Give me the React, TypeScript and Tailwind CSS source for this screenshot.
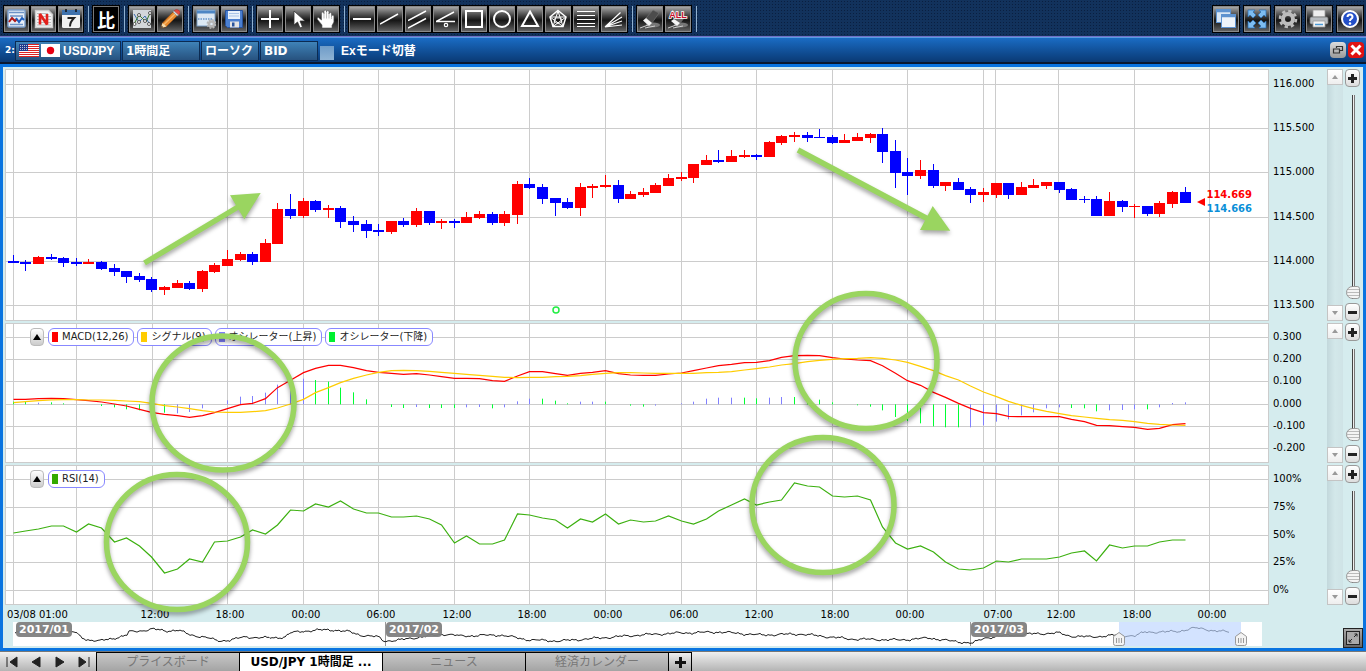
import React, { useState } from 'react';

type Candle = [number, number, number, number, 'r' | 'b'];

// x of the first bar and distance between two bars
const FIRST_X = 13;
const STEP = 12.6;
const barX = (i: number) => Math.floor(FIRST_X + STEP * i + 0.35);

// high, low, body top, body bottom, colour
const CANDLES: Candle[] = [
  [255, 263, 261, 263, 'b'], [260, 271, 262, 264, 'b'], [256, 264, 257, 264, 'r'], [254, 260, 257, 259, 'b'],
  [257, 267, 258, 263, 'b'], [258, 266, 262, 264, 'b'], [259, 264, 262, 264, 'r'], [261, 270, 262, 269, 'b'],
  [264, 276, 268, 272, 'b'], [271, 283, 271, 277, 'b'], [273, 282, 276, 280, 'b'], [277, 292, 279, 290, 'b'],
  [286, 295, 287, 290, 'r'], [280, 288, 283, 288, 'r'], [281, 290, 283, 289, 'b'], [270, 292, 271, 289, 'r'],
  [263, 273, 265, 272, 'r'], [250, 266, 259, 266, 'r'], [252, 261, 254, 260, 'r'], [252, 265, 254, 262, 'b'],
  [239, 262, 243, 262, 'r'], [203, 244, 209, 244, 'r'], [194, 219, 209, 216, 'b'], [198, 218, 201, 216, 'r'],
  [200, 212, 201, 210, 'b'], [205, 218, 208, 210, 'r'], [206, 228, 208, 222, 'b'], [216, 232, 221, 225, 'b'],
  [220, 238, 224, 231, 'b'], [224, 236, 230, 232, 'b'], [221, 234, 221, 232, 'r'], [218, 227, 221, 225, 'b'],
  [208, 227, 211, 225, 'r'], [211, 225, 211, 223, 'b'], [219, 229, 221, 223, 'r'], [219, 228, 221, 223, 'b'],
  [212, 223, 217, 223, 'r'], [211, 219, 214, 218, 'r'], [212, 225, 214, 223, 'b'], [211, 226, 214, 223, 'r'],
  [181, 224, 184, 215, 'r'], [178, 189, 184, 188, 'b'], [184, 204, 187, 199, 'b'], [198, 216, 198, 203, 'b'],
  [198, 209, 202, 208, 'b'], [183, 216, 187, 208, 'r'], [184, 198, 186, 188, 'r'], [175, 188, 185, 187, 'r'],
  [180, 203, 185, 199, 'b'], [191, 199, 194, 199, 'r'], [188, 197, 192, 195, 'r'], [183, 193, 185, 193, 'r'],
  [174, 186, 178, 186, 'r'], [172, 181, 177, 179, 'r'], [164, 183, 164, 178, 'r'], [155, 165, 160, 165, 'r'],
  [150, 163, 160, 162, 'b'], [150, 162, 156, 162, 'r'], [150, 158, 155, 157, 'r'], [154, 160, 155, 157, 'b'],
  [141, 157, 142, 157, 'r'], [135, 145, 136, 143, 'r'], [132, 142, 135, 137, 'r'], [132, 142, 135, 138, 'b'],
  [129, 138, 137, 138, 'b'], [135, 144, 137, 143, 'b'], [134, 143, 140, 143, 'r'], [133, 141, 137, 141, 'r'],
  [133, 143, 134, 138, 'r'], [128, 163, 134, 152, 'b'], [140, 188, 151, 173, 'b'], [158, 195, 172, 176, 'b'],
  [160, 179, 170, 176, 'r'], [164, 188, 170, 186, 'b'], [182, 191, 182, 186, 'r'], [178, 190, 182, 190, 'b'],
  [187, 203, 189, 195, 'b'], [188, 202, 192, 195, 'r'], [183, 198, 183, 195, 'r'], [183, 199, 183, 195, 'b'],
  [182, 195, 187, 195, 'r'], [179, 188, 185, 188, 'r'], [182, 189, 182, 186, 'r'], [182, 193, 182, 190, 'b'],
  [188, 200, 189, 200, 'b'], [196, 203, 199, 200, 'b'], [196, 216, 199, 216, 'b'], [192, 216, 201, 216, 'r'],
  [200, 212, 201, 207, 'b'], [204, 218, 206, 207, 'r'], [206, 216, 206, 214, 'b'], [201, 217, 203, 214, 'r'],
  [191, 208, 192, 204, 'r'], [187, 203, 192, 203, 'b'],
];

// The oscillator series are kept in thirds of a pixel below y=320
const fine = (v: number) => 320 + v / 3;
const ZERO = 253;

const MACD = [
  238, 238, 236, 235, 236, 239, 242, 246, 252, 258, 268, 277, 283, 287, 292, 287, 278, 266, 254, 250, 236, 203, 181, 158,
  145, 136, 136, 143, 152, 157, 160, 163, 161, 165, 170, 175, 175, 176, 182, 184, 168, 155, 155, 161, 166, 160, 157, 152,
  161, 165, 166, 166, 162, 159, 152, 144, 137, 133, 128, 127, 122, 112, 107, 106, 107, 113, 117, 120, 122, 137, 160, 182,
  196, 217, 232, 250, 265, 278, 281, 289, 290, 290, 290, 290, 298, 305, 316, 317, 320, 322, 328, 325, 314, 311,
];

const SIGNAL = [
  248, 245, 242, 240, 239, 239, 240, 240, 241, 243, 245, 250, 257, 261, 266, 272, 276, 277, 277, 275, 272, 264, 252, 238,
  218, 203, 188, 175, 165, 157, 152, 151, 152, 154, 157, 160, 163, 166, 169, 172, 173, 172, 172, 170, 169, 167, 163, 160,
  158, 158, 159, 160, 160, 160, 160, 158, 157, 155, 150, 146, 141, 135, 131, 125, 121, 118, 116, 115, 113, 115, 120, 127,
  139, 152, 167, 180, 198, 216, 230, 244, 256, 266, 274, 281, 287, 291, 295, 299, 301, 305, 310, 313, 315, 316,
];

// g = falling, p = rising
const OSCILLATOR =
  'g245 g246 p248 g247 g250 - - g258 g262 g268 g271 p275 g278 p280 p276 p265 - p241 p230 p228 p218 p194 p200 p176 g180 g185 g203 g217 g238 - g261 g264 p261 g264 g264 g264 p262 p261 g265 p262 p244 p236 g236 g242 g250 p245 p245 g245 - g257 g260 p257 - p250 p245 p236 p233 p233 g233 g235 p233 p231 g231 g235 g239 g247 - g256 g260 g271 g291 g303 g310 g319 g322 g322 p322 p316 p305 p298 p286 p277 p265 p262 g264 g265 g274 p271 p270 p268 g268 p262 p249 p247'.split(' ');

const RSI = [
  533, 531, 529, 526, 526, 532, 524, 528, 542, 538, 546, 557, 573, 569, 559, 562, 542, 541, 537, 530, 534, 525, 510, 511,
  504, 507, 501, 509, 513, 513, 517, 517, 516, 519, 525, 543, 536, 544, 544, 540, 514, 515, 518, 520, 528, 519, 522, 514,
  524, 520, 522, 521, 516, 521, 524, 519, 511, 505, 499, 505, 502, 500, 483, 486, 487, 496, 497, 496, 500, 527, 543, 549,
  546, 552, 562, 569, 570, 568, 561, 562, 559, 559, 559, 557, 553, 551, 561, 545, 548, 546, 546, 542, 540, 540,
];

const OVERVIEW = [
  [15, 633], [30, 632], [45, 630], [60, 633], [75, 632], [82, 638], [90, 640], [100, 641], [115, 638], [127, 635], [129, 632],
  [140, 631], [152, 629], [165, 631], [178, 630], [190, 635], [205, 637], [218, 641], [230, 640], [245, 637], [270, 638],
  [285, 637], [290, 633], [305, 631], [320, 630], [335, 630], [350, 632], [360, 635], [378, 637], [384, 641], [400, 640],
  [420, 637], [445, 634], [460, 636], [500, 635], [530, 640], [560, 641], [600, 638], [640, 635], [680, 633], [720, 632],
  [760, 635], [800, 634], [850, 639], [900, 640], [930, 638], [950, 641], [960, 642], [973, 643], [985, 638], [1000, 636],
  [1030, 634], [1058, 633], [1070, 636], [1090, 637], [1119, 635], [1135, 636], [1145, 632], [1165, 632], [1180, 631],
  [1195, 628], [1205, 629], [1215, 631], [1231, 632],
];

const GRID_X = [13, 76, 152, 227, 303, 378, 454, 529, 605, 681, 756, 832, 907, 983, 995, 1058, 1134, 1209];

const TIMES: [number, string][] = [
  [155, '12:00'], [230, '18:00'], [306, '00:00'], [381, '06:00'], [457, '12:00'], [532, '18:00'], [608, '00:00'],
  [684, '06:00'], [759, '12:00'], [835, '18:00'], [910, '00:00'], [998, '07:00'], [1061, '12:00'], [1137, '18:00'], [1212, '00:00'],
];

const line = (ys: number[]) => ys.map((y, i) => `${barX(i) + 0.5},${y}`).join(' ');

// adds the small tick noise between the stored points of the long term chart
const overviewPoints = () => {
  const out: string[] = [];
  for (let i = 0; i < OVERVIEW.length - 1; i++) {
    const [x0, y0] = OVERVIEW[i];
    const [x1, y1] = OVERVIEW[i + 1];
    for (let x = x0; x < x1; x += 2) {
      const noise = Math.sin(x * 1.7) * 0.5 + Math.sin(x * 0.61) * 0.6 + Math.sin(x * 0.23) * 0.7;
      out.push(`${x},${(y0 + ((y1 - y0) * (x - x0)) / (x1 - x0) + noise).toFixed(1)}`);
    }
  }
  return out.join(' ');
};

const Svg: React.FC<{ children: React.ReactNode }> = ({ children }) => (
  <svg viewBox="0 0 20 20" className="h-5 w-5" fill="none" stroke="#fff" strokeWidth="1.5">
    {children}
  </svg>
);

const ICONS: Record<string, React.ReactNode> = {
  chart: (
    <Svg>
      <rect x="1" y="1" width="17" height="17" rx="1" fill="#e9eff7" stroke="#7fa3cf" />
      <path d="M2 3.5h15M3 7h13M3 15.5h13" stroke="#6d93c6" />
      <path d="M2 13l3-4 3 3 2-2" stroke="#b01818" strokeWidth="2" />
      <path d="M9 9l3 4 3-4 2 2" stroke="#1e5fc0" strokeWidth="2" />
    </Svg>
  ),
  news: (
    <Svg>
      <path d="M1.5 1.5h13l4 4v13h-17z" fill="#f4f4f4" stroke="#ccc" />
      <path d="M3 4.5h11M3 7.5h14M3 10.5h14M3 13.5h14M3 16h14" stroke="#bbb" strokeWidth="1" />
      <path d="M6 15.5V5l7 10.500V5" stroke="#e3201b" strokeWidth="2.6" strokeLinejoin="bevel" />
    </Svg>
  ),
  calendar: (
    <Svg>
      <rect x="1" y="1" width="18" height="18" rx="1.5" fill="#f2f2f2" stroke="none" />
      <path d="M1 1h18v5H1z" fill="#3f72ad" stroke="none" />
      <path d="M5 0v3M15 0v3" stroke="#111" strokeWidth="1.5" />
      <path d="M6.500 9H13q-4 4-4 8.500" stroke="#222" strokeWidth="2" />
    </Svg>
  ),
  indicator: (
    <Svg>
      <rect x="1" y="1" width="18" height="18" fill="#d3d7da" stroke="none" />
      <path d="M2 5l5 8 6-6 5 9" stroke="#3a6fb0" strokeWidth="1" />
      <path d="M2 15l5-9 7 7 4-9" stroke="#3f7a2e" strokeWidth="1" />
      <g fill="#fff" stroke="#333" strokeWidth=".8">
        <circle cx="2.500" cy="15" r="1.500" />
        <circle cx="7" cy="6" r="1.500" />
        <circle cx="13" cy="12" r="1.500" />
        <circle cx="18" cy="4" r="1.500" />
        <circle cx="7" cy="13" r="1.500" />
        <circle cx="17" cy="15" r="1.500" />
      </g>
    </Svg>
  ),
  pencil: (
    <Svg>
      <path d="M1 19l1.500-5L13 3l4 4L6.500 17.500z" fill="#e88a2f" stroke="#8a4a14" strokeWidth=".8" />
      <path d="M4 15.500L15 5" stroke="#f8b76a" strokeWidth="1.2" />
      <path d="M14 2l1-1q2-1 4 .5t.5 3.500l-1 1z" fill="#e34a3f" stroke="#a33" strokeWidth=".6" />
      <path d="M13 3l1-1 4.500 4-1.500 1z" fill="#ddd" stroke="#999" strokeWidth=".5" />
      <path d="M1 19l1.500-5 4 3.500z" fill="#f5dcae" stroke="none" />
      <path d="M1 19l.7-2.300 1.600 1.500z" fill="#222" stroke="none" />
    </Svg>
  ),
  settingsPanel: (
    <Svg>
      <rect x="1" y="1" width="18" height="16" fill="#dce8f3" stroke="#7c9fc4" strokeWidth="1" />
      <path d="M1 3h18" stroke="#4d86c4" strokeWidth="3" />
      <path d="M2 10h15" stroke="#2b6cb8" strokeDasharray="1.500 1" strokeWidth="1" />
      <circle cx="15.500" cy="15" r="2.500" fill="none" stroke="#b5b5b5" strokeWidth="2.500" />
      <circle cx="15.500" cy="15" r="4.200" fill="none" stroke="#b5b5b5" strokeWidth="1.500" strokeDasharray="2 1.300" />
    </Svg>
  ),
  save: (
    <Svg>
      <path d="M1.500 1.500h17v17h-15l-2-2z" fill="#4a7fd0" stroke="#28539c" strokeWidth="1" />
      <rect x="4" y="2" width="12" height="8" fill="#e8f1fb" stroke="none" />
      <path d="M5 4.500h10M5 7h10" stroke="#a9c4e8" strokeWidth="1" />
      <rect x="6" y="12.500" width="9" height="6" fill="#e3e3e3" stroke="none" />
      <rect x="8" y="13.500" width="2.500" height="4" fill="#28539c" stroke="none" />
    </Svg>
  ),
  cross: <Svg><path d="M1 10h18M10 1v18" strokeWidth="2" /></Svg>,
  pointer: (
    <Svg>
      <path d="M6 2v14l3.500-3 2.500 6 2.500-1-2.500-6H17z" fill="#fff" stroke="#333" strokeWidth=".8" />
    </Svg>
  ),
  hand: (
    <Svg>
      <path
        d="M6 19v-3l-4.500-5.500q-1-2 1-2L5.500 11V4.500Q5.500 3 6.700 3T8 4.500V2.500Q8 1 9.200 1t1.300 1.500V3q0-1.500 1.300-1.500T13 3v2q0-1.500 1.300-1.500T15.500 5v2.500q0-1.200 1.200-1.200t1.200 1.200V13L16 16.500V19z"
        fill="#fff"
        stroke="#555"
        strokeWidth=".6"
      />
      <path d="M8 4v5.500M10.500 3v6.500M13 4v5.500M15.500 6v4" stroke="#999" strokeWidth=".6" />
    </Svg>
  ),
  horizontal: <Svg><path d="M1 10h18" strokeWidth="2" /></Svg>,
  trend: <Svg><path d="M0 15L18 5" /></Svg>,
  channel: <Svg><path d="M0 11.500L18 2M0 19L18 9.500" /></Svg>,
  angle: <Svg><path d="M18 3L0 12.500h19" /><circle cx="10" cy="16" r="1.700" strokeWidth="1.200" /></Svg>,
  square: <Svg><rect x="2" y="2" width="16" height="16" strokeWidth="2" /></Svg>,
  circle: <Svg><circle cx="10" cy="10" r="8" strokeWidth="2" /></Svg>,
  triangle: <Svg><path d="M10 2.500L18 17H2z" strokeWidth="2" /></Svg>,
  pentagon: (
    <Svg>
      <path d="M10 1.500l8 6.500-3 9.500H5L2 8z" />
      <path d="M10 2l5 15.500L2 8h16L5 17.500z" strokeWidth="1" />
      <path d="M7 9h6l1 3.500-4 2.500-4-2.500z" strokeWidth=".8" />
    </Svg>
  ),
  levels: <Svg><path d="M1 2.500h18M1 6.500h18M1 10.500h18M1 14.500h18M1 17.500h18" strokeWidth="1" /></Svg>,
  fan: <Svg><path d="M1 18L16.500 3.500M1 18L18 8M1 18L18 12M1 18L18 16" strokeWidth="1.200" /></Svg>,
  eraser: (
    <Svg>
      <ellipse cx="13" cy="16" rx="7" ry="2.500" fill="#777" stroke="none" />
      <path d="M6 9l7-8 6 3-7 10z" fill="#4c4c4c" stroke="#777" strokeWidth=".6" />
      <path d="M3 11.500l3-2.500 6 5-3 3z" fill="#f4f4f4" stroke="none" />
      <path d="M0 19l8-3M5 19l10-2" stroke="#ccc" strokeWidth="1" />
    </Svg>
  ),
  eraseAll: (
    <Svg>
      <ellipse cx="13" cy="16" rx="7" ry="2.500" fill="#777" stroke="none" />
      <path d="M6 11l5-4h7l-6 8z" fill="#666" stroke="none" />
      <path d="M3 12l3-2 6 4-3 3z" fill="#f4f4f4" stroke="none" />
      <path d="M0 19l8-3M5 19l10-2" stroke="#ccc" strokeWidth="1" />
      <text
        x="10"
        y="9"
        textAnchor="middle"
        fill="#c8102e"
        stroke="#fff"
        strokeWidth="1.5"
        paintOrder="stroke"
        className="font-['Liberation_Sans',sans-serif] text-[9px] font-bold"
      >
        ALL
      </text>
    </Svg>
  ),
  windows: (
    <Svg>
      <rect x=".500" y=".500" width="14" height="13" fill="#d9e6f4" stroke="#5e92cf" strokeWidth="1" />
      <path d="M0 2h15" stroke="#5e92cf" strokeWidth="2.500" />
      <rect x="5.500" y="5.500" width="14" height="13" fill="#eef3f9" stroke="#5e92cf" strokeWidth="1" />
      <path d="M5 7h15" stroke="#5e92cf" strokeWidth="2.500" />
    </Svg>
  ),
  expand: (
    <Svg>
      <path
        d="M1 1h7L6 3l3 3-3 3-3-3-2 2zM19 1v7l-2-2-3 3-3-3 3-3-2-2zM1 19v-7l2 2 3-3 3 3-3 3 2 2zM19 19h-7l2-2-3-3 3-3 3 3 2-2z"
        fill="#7dbcf0"
        stroke="#2a6fb5"
        strokeWidth=".7"
      />
    </Svg>
  ),
  gear: (
    <Svg>
      <circle cx="10" cy="10" r="5" stroke="#bdbdbd" strokeWidth="4" />
      <circle cx="10" cy="10" r="8" stroke="#bdbdbd" strokeWidth="2.600" strokeDasharray="3.300 2.980" />
    </Svg>
  ),
  printer: (
    <Svg>
      <path d="M4 1h12v7H4z" fill="#eee" stroke="#999" strokeWidth=".8" />
      <rect x="1" y="8" width="18" height="7" rx="1.500" fill="#b8bcc0" stroke="#777" strokeWidth=".8" />
      <path d="M4 12h12v6H4z" fill="#f4f4f4" stroke="#999" strokeWidth=".8" />
      <path d="M6 15.500h8" stroke="#4c9ad6" strokeWidth="1.500" />
    </Svg>
  ),
  help: (
    <Svg>
      <circle cx="10" cy="10" r="8" fill="#2450c8" strokeWidth="2" />
      <path d="M7.500 8q0-2.500 2.500-2.500T12.500 8q0 1.200-1.300 1.900T10 12" strokeWidth="2" />
      <circle cx="10" cy="14.500" r="1.200" fill="#fff" stroke="none" />
    </Svg>
  ),
};

const ToolButton: React.FC<{ name: string; narrow?: boolean }> = ({ name, narrow }) => (
  <button
    aria-label={name}
    className={`${narrow ? 'w-[27px]' : 'w-7'} flex h-7 items-center justify-center border border-black bg-linear-to-b from-[#b4b4b4] via-[#161616] via-55% to-[#6a6a6a] shadow-[inset_0_0_0_1px_#8a8a8a]`}
  >
    {ICONS[name]}
  </button>
);

const Divider = () => <span className="mr-[3px] ml-1 h-[26px] w-px bg-[#8fb0d0]" />;

const Toolbar = () => (
  <header className="flex h-[37px] items-center justify-between border-b border-[#6f6fc4] bg-[#12325c] bg-[radial-gradient(#0a1f40_1px,transparent_1px)] bg-[size:3px_3px] pt-px pr-[2px] pl-[3px]">
    <div className="flex items-center">
      <ToolButton name="chart" narrow />
      <ToolButton name="news" narrow />
      <ToolButton name="calendar" narrow />
      <Divider />
      <button className="flex h-7 w-7 items-center justify-center border border-black bg-black font-['Noto_Sans_CJK_JP',sans-serif] text-lg leading-none font-bold text-white shadow-[inset_0_0_0_1px_#777]">
        比
      </button>
      <Divider />
      {['indicator', 'pencil'].map((n) => <ToolButton key={n} name={n} />)}
      <Divider />
      {['settingsPanel', 'save'].map((n) => <ToolButton key={n} name={n} />)}
      <Divider />
      {['cross', 'pointer', 'hand'].map((n) => <ToolButton key={n} name={n} />)}
      <Divider />
      {['horizontal', 'trend', 'channel', 'angle', 'square', 'circle', 'triangle', 'pentagon', 'levels', 'fan'].map((n) => (
        <ToolButton key={n} name={n} />
      ))}
      <Divider />
      {['eraser', 'eraseAll'].map((n) => <ToolButton key={n} name={n} />)}
      <Divider />
    </div>
    <div className="flex items-center gap-[3px]">
      {['windows', 'expand', 'gear', 'printer', 'help'].map((n) => <ToolButton key={n} name={n} />)}
    </div>
  </header>
);

const FIELD =
  'h-5 appearance-none border border-[#0b2b52] bg-linear-to-b from-[#3f83b8] to-[#27527f] px-[3px] text-xs leading-none font-bold text-white';

const TitleBar = () => (
  <div className="flex h-[27px] items-center border-t border-b-2 border-t-[#5b9be0] border-b-[#0a1830] bg-linear-to-b from-[#1a6cc4] to-[#0a3a75] pl-[5px] font-['DejaVu_Sans','Noto_Sans_CJK_JP',sans-serif] text-white">
    <span className="w-[10px] pt-px text-[9px] font-bold">2:</span>
    <div className="flex flex-1 items-center gap-px pt-px">
      <button className={`${FIELD} flex w-[106px] items-center gap-[2px] font-['Liberation_Sans',sans-serif]`}>
        <svg viewBox="0 0 20 13" className="h-[13px] w-5">
          <rect width="20" height="13" fill="#fff" />
          <path d="M0 .5h20M0 2.500h20M0 4.500h20M0 6.500h20M0 8.500h20M0 10.500h20M0 12.500h20" stroke="#d22" />
          <rect width="9" height="7" fill="#1f3a8a" />
          <path d="M1 1.500h7M1 3.500h7M1 5.500h7" stroke="#fff" strokeWidth=".7" strokeDasharray="1 1" />
        </svg>
        <svg viewBox="0 0 19 13" className="h-[13px] w-[19px]">
          <rect width="19" height="13" fill="#fff" />
          <circle cx="9.500" cy="6.500" r="3.700" fill="#e60012" />
        </svg>
        <span className="pl-px">USD/JPY</span>
      </button>
      <select aria-label="足種" className={`${FIELD} w-[78px]`}><option>1時間足</option></select>
      <select aria-label="チャート種類" className={`${FIELD} w-[58px]`}><option>ローソク</option></select>
      <select aria-label="価格" className={`${FIELD} w-[58px]`}><option>BID</option></select>
      <label className="flex items-center gap-[7px] pl-px font-['Liberation_Sans','Noto_Sans_CJK_JP',sans-serif] text-xs leading-none font-bold">
        <input type="checkbox" className="mt-1 h-[14px] w-[14px] appearance-none bg-linear-to-b from-[#6f9cc8] to-[#8fb3d4]" />
        Exモード切替
      </label>
    </div>
    <div className="flex gap-[2px] pr-[2px]">
      <button aria-label="restore" className="flex h-4 w-4 items-center justify-center rounded-sm bg-linear-to-b from-[#ddd] to-[#999]">
        <svg viewBox="0 0 12 12" className="h-3 w-3" fill="none" stroke="#333" strokeWidth="1.2">
          <path d="M4.500 4V2.500h6v4H8M1.500 5h6v4h-6z" />
        </svg>
      </button>
      <button aria-label="close" className="flex h-4 w-4 items-center justify-center rounded-sm bg-[#e01212]">
        <svg viewBox="0 0 12 12" className="h-3 w-3" stroke="#fff" strokeWidth="3">
          <path d="M1.500 1.500l9 9M10.500 1.500l-9 9" />
        </svg>
      </button>
    </div>
  </div>
);

const ZoomButton: React.FC<{ plus?: boolean }> = ({ plus }) => (
  <button
    aria-label={plus ? 'zoom in' : 'zoom out'}
    className="flex h-[18px] w-[15px] shrink-0 items-center justify-center rounded border border-[#999] bg-linear-to-b from-white to-[#ddd]"
  >
    <svg viewBox="0 0 9 9" className="h-[9px] w-[9px]" stroke="#222" strokeWidth="3">
      <path d={plus ? 'M0 4.500h9M4.500 0v9' : 'M0 4.500h9'} />
    </svg>
  </button>
);

const ScrollButton: React.FC<{ down?: boolean }> = ({ down }) => (
  <button
    aria-label={down ? 'scroll down' : 'scroll up'}
    className="flex h-4 w-4 shrink-0 items-center justify-center border border-[#c4c4c4] bg-linear-to-b from-white to-[#eee]"
  >
    <svg viewBox="0 0 6 4" className="h-1 w-[6px]" fill="#999">
      <path d={down ? 'M0 0h6L3 4z' : 'M0 4h6L3 0z'} />
    </svg>
  </button>
);

interface PanelProps {
  top: number;
  height: string;
  viewHeight: number;
  labels: string[];
  labelClass: string;
  gridY: number[];
  overlay?: React.ReactNode;
  children: React.ReactNode;
}

const Panel: React.FC<PanelProps> = ({ top, height, viewHeight, labels, labelClass, gridY, overlay, children }) => (
  <section className={`${height} flex`}>
    <div className="relative min-w-0 flex-1">
      <svg viewBox={`5 ${top} 1264 ${viewHeight}`} preserveAspectRatio="none" className="h-full w-full bg-white">
        <g stroke="#ccc" strokeWidth="1">
          {GRID_X.map((x) => <path key={x} d={`M${x + 0.5} ${top}v${viewHeight}`} />)}
          {gridY.map((y) => <path key={y} d={`M5 ${y + 0.5}h1264`} />)}
          <rect x="5.500" y={top + 0.5} width="1263" height={viewHeight - 1} fill="none" />
        </g>
        {children}
      </svg>
      {overlay}
    </div>
    <div className={`${labelClass} flex w-[58px] flex-col justify-between pl-1 text-[10px] leading-3`}>
      {labels.map((l) => <span key={l}>{l}</span>)}
    </div>
    <div className="flex w-4 flex-col justify-between bg-linear-to-r from-[#c3d8dc] via-[#d3e8ea] to-[#cfe3e6]">
      <ScrollButton />
      <ScrollButton down />
    </div>
    <div className="mr-[3px] ml-[2px] flex w-[15px] flex-col items-center">
      <ZoomButton plus />
      <input
        type="range"
        aria-label="scale"
        defaultValue={100}
        className="mt-2 mb-1 min-h-0 w-[15px] flex-1 appearance-none bg-[linear-gradient(90deg,transparent_7px,#444_7px,#444_8px,#eee_8px,#eee_9px,#777_9px,#777_10px,transparent_10px)] [writing-mode:vertical-lr] [&::-webkit-slider-thumb]:h-[13px] [&::-webkit-slider-thumb]:w-[14px] [&::-webkit-slider-thumb]:appearance-none [&::-webkit-slider-thumb]:rounded-l-[7px] [&::-webkit-slider-thumb]:rounded-r-[3px] [&::-webkit-slider-thumb]:border [&::-webkit-slider-thumb]:border-[#999] [&::-webkit-slider-thumb]:bg-[repeating-linear-gradient(#f4f4f4_0,#f4f4f4_2px,#bbb_2px,#bbb_3px)]"
      />
      <ZoomButton />
    </div>
  </section>
);

const Legend: React.FC<{ items: [string, string][] }> = ({ items }) => (
  <div className="absolute top-[5px] left-[25px] flex gap-[3px]">
    <button aria-label="collapse" className="mr-px flex h-[18px] w-[14px] items-center justify-center rounded-sm border border-[#bbb] bg-linear-to-b from-white to-[#ccc]">
      <svg viewBox="0 0 8 6" className="h-[6px] w-2"><path d="M0 6h8L4 0z" /></svg>
    </button>
    {items.map(([color, name]) => (
      <span key={name} className="flex h-[18px] items-center gap-1 rounded-md border border-[#8888ff] bg-white pr-[5px] pl-[3px] text-[10px] leading-none text-[#222]">
        <i className={`${color} h-[10px] w-[6px]`} />
        {name}
      </span>
    ))}
  </div>
);

const ChartArea = () => (
  <div className="relative flex flex-col gap-[2px] pt-[2px] pl-[2px]">
    <Panel
      top={69}
      height="h-[252px]"
      viewHeight={252}
      labels={['116.000', '115.500', '115.000', '114.500', '114.000', '113.500']}
      labelClass="pt-[9px] pb-[10px]"
      gridY={[84, 128, 172, 217, 261, 305]}
      overlay={
        <div className="absolute top-[119px] right-[17px] flex items-center gap-px text-[10px] leading-[14px] font-bold">
          <svg viewBox="0 0 8 8" className="h-2 w-2"><path d="M8 0v8L0 4z" fill="red" /></svg>
          <div className="flex flex-col">
            <span className="text-[#f00]">114.669</span>
            <span className="text-[#0a8fd8]">114.666</span>
          </div>
        </div>
      }
    >
      {CANDLES.map(([hi, lo, top, bottom, c], i) => (
        <path
          key={i}
          d={`M${barX(i)} ${hi}h1V${lo}h-1zM${barX(i) - 5} ${top}h11V${bottom}h-11z`}
          fill={c === 'r' ? '#f00' : '#00f'}
        />
      ))}
      <circle cx="556" cy="310" r="3" fill="none" stroke="#2e4" strokeWidth="1.500" />
    </Panel>

    <Panel
      top={323}
      height="h-[140px]"
      viewHeight={140}
      labels={['0.300', '0.200', '0.100', '0.000', '-0.100', '-0.200']}
      labelClass="pt-[8px] pb-[9px]"
      gridY={[337, 359, 381, 404, 426, 448]}
      overlay={
        <Legend
          items={[
            ['bg-[#f00]', 'MACD(12,26)'],
            ['bg-[#fc0]', 'シグナル(9)'],
            ['bg-[#8080ff]', 'オシレーター(上昇)'],
            ['bg-[#00f030]', 'オシレーター(下降)'],
          ]}
        />
      }
    >
      {OSCILLATOR.map((o, i) => {
        if (o === '-') return null;
        return (
          <path
            key={i}
            d={`M${barX(i) + 0.5} ${fine(ZERO)}V${fine(Number(o.slice(1)))}`}
            stroke={o[0] === 'g' ? '#0f3' : '#8080ff'}
          />
        );
      })}
      <polyline points={line(MACD.map(fine))} fill="none" stroke="#f00" strokeWidth="1.200" />
      <polyline points={line(SIGNAL.map(fine))} fill="none" stroke="#fc0" strokeWidth="1.200" />
    </Panel>

    <Panel
      top={465}
      height="h-[140px]"
      viewHeight={140}
      labels={['100%', '75%', '50%', '25%', '0%']}
      labelClass="pt-[8px] pb-[9px]"
      gridY={[479, 507, 535, 562, 590]}
      overlay={<Legend items={[['bg-[#3a0]', 'RSI(14)']]} />}
    >
      <polyline points={line(RSI)} fill="none" stroke="#3cb010" strokeWidth="1.200" />
    </Panel>

    {/* hand drawn marks that run across the three panels */}
    <svg
      viewBox="5 69 1264 536"
      preserveAspectRatio="none"
      className="pointer-events-none absolute top-[2px] right-[94px] left-[2px] h-[536px] w-[calc(100%-96px)] overflow-visible drop-shadow-[0_3px_2px_rgba(0,0,0,0.35)]"
      fill="none"
      stroke="#9ad560"
      strokeWidth="5.500"
    >
      <ellipse cx="223" cy="403" rx="71" ry="67" />
      <ellipse cx="866" cy="361" rx="71" ry="67.500" />
      <ellipse cx="177" cy="542" rx="70.500" ry="67.500" />
      <ellipse cx="823" cy="505" rx="71" ry="67.500" />
      <path d="M144.500 263L238 207M798 150L928 219" />
      <path d="M230 195.300L260.700 193 244.300 219.300zM932.700 206L950.300 230.700 920 230z" fill="#9ad560" stroke="none" />
    </svg>
  </div>
);

const TimeAxis = () => (
  <svg className="mr-[94px] ml-[2px] h-[17px] w-[calc(100%-96px)] text-[10px]">
    <text x="2" y="13">03/08 01:00</text>
    {TIMES.map(([x, t]) => (
      <text key={x} x={`${((x - 5) / 1264) * 100}%`} y="13" textAnchor="middle">{t}</text>
    ))}
  </svg>
);

const MONTHS: [number, string][] = [[3, '2017/01'], [373, '2017/02'], [958, '2017/03']];

const Overview = () => (
  <div className="flex h-[26px] pl-[10px]">
    <div className="relative h-6 min-w-0 flex-1">
      <svg viewBox="13 622 1249 24" preserveAspectRatio="none" className="h-full w-full bg-white">
        <path d="M385.500 622v24M970.500 622v24" stroke="#999" />
        <polyline points={overviewPoints()} fill="none" stroke="#222" />
        <rect x="1119" y="622" width="122" height="24" fill="#bcd4ff" fillOpacity=".65" />
        {[1119, 1241].map((x) => (
          <g key={x}>
            <path d={`M${x} 632.500l5.500 4v7q0 2-2 2h-7q-2 0-2-2v-7z`} fill="#f3f3f3" stroke="#999" />
            <path d={`M${x - 2.5} 638v5M${x} 638v5M${x + 2.5} 638v5`} stroke="#999" />
          </g>
        ))}
      </svg>
      {MONTHS.map(([x, m]) => (
        <span
          key={m}
          style={{ left: `${(x / 1249) * 100}%` }}
          className="absolute top-0 rounded bg-[#808080]/95 px-[3px] text-[11px] leading-[15px] font-bold text-white"
        >
          {m}
        </span>
      ))}
    </div>
    <div className="flex w-[101px] items-end justify-end">
      <button aria-label="fullscreen" className="flex h-5 w-5 items-center justify-center border border-[#222] bg-linear-to-b from-[#aaa] to-[#666]">
        <svg viewBox="0 0 14 14" className="h-[14px] w-[14px]" fill="none" stroke="#222">
          <rect x=".5" y=".5" width="13" height="13" fill="#aaa" />
          <path d="M8.500 3H11v2.500M11 3L8 6M5.500 11H3V8.500M3 11l3-3" />
        </svg>
      </button>
    </div>
  </div>
);

const TABS = ['プライスボード', 'USD/JPY 1時間足 ...', 'ニュース', '経済カレンダー'];
const NAV = ['M1 1v10M11 1v10L4 6z', 'M10 1v10L2 6z', 'M2 1v10l8-5z', 'M11 1v10M1 1v10l7-5z'];

const TabBar = () => {
  const [active, setActive] = useState(1);

  return (
    <nav className="flex h-5 border-t border-[#777] bg-linear-to-b from-[#f0f0f0] to-[#b4b4b4]">
      <div className="flex w-[96px] items-center justify-between px-[6px]">
        {NAV.map((d) => (
          <button key={d} aria-label="tab scroll">
            <svg viewBox="0 0 12 12" className="h-3 w-3" fill="#222" stroke="#222"><path d={d} /></svg>
          </button>
        ))}
      </div>
      {TABS.map((t, i) => (
        <button
          key={t}
          onClick={() => setActive(i)}
          className={`${
            i === active ? 'bg-white font-bold text-black' : 'bg-linear-to-b from-[#c8c8c8] to-[#a4a4a4] text-[#777]'
          } w-[143px] overflow-hidden border-t border-l border-black text-xs leading-none whitespace-nowrap`}
        >
          {t}
        </button>
      ))}
      <button aria-label="add tab" className="flex w-6 items-center justify-center border-x border-t border-black bg-linear-to-b from-[#eee] to-[#aaa]">
        <svg viewBox="0 0 11 11" className="h-[11px] w-[11px]" stroke="#111" strokeWidth="3"><path d="M0 5.500h11M5.500 0v11" /></svg>
      </button>
    </nav>
  );
};

const App: React.FC = () => (
  <div className="w-full font-['DejaVu_Sans','Noto_Sans_CJK_JP',sans-serif] text-black">
    <Toolbar />
    <TitleBar />
    <main className="bg-[#0a74e0] p-[3px]">
      <div className="bg-[#d5ecee]">
        <ChartArea />
        <TimeAxis />
        <Overview />
      </div>
    </main>
    <TabBar />
  </div>
);

export default App;
